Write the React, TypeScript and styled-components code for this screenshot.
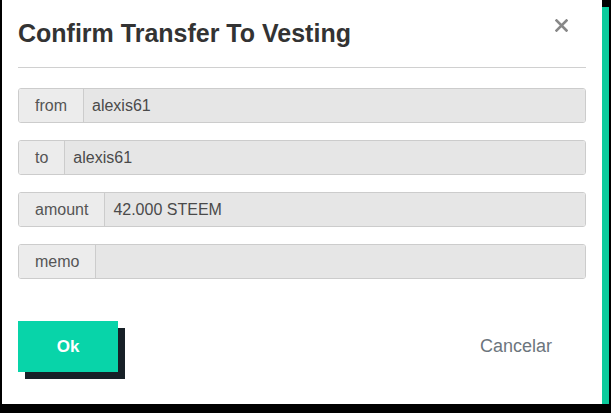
import React from "react";
import styled, { createGlobalStyle } from "styled-components";

const GlobalStyle = createGlobalStyle`
    body {
        margin: 0;
        background: #000;
        font-family: "Liberation Sans", Arial, sans-serif;
    }
`

const Modal = styled.div`
    box-sizing: border-box;
    width: 600px;
    height: 404px;
    margin-left: 2px;
    padding: 0 16px 32px;
    background: #fff;
    box-shadow: 7px 7px 0 #0bcb9c;
    display: flex;
    flex-direction: column;
`

const Header = styled.div`
    display: flex;
    justify-content: space-between;
    align-items: flex-start;
    padding: 19px 0;
    border-bottom: 1px solid #d0d0d0;
`

const Title = styled.h2`
    margin: 0;
    font-family: "Liberation Sans", Arial, sans-serif;
    font-size: 25px;
    line-height: 29px;
    font-weight: bold;
    color: #333;
`

const Close = styled.button`
    border: none;
    background: none;
    padding: 0;
    margin-right: 18px;
    width: 13px;
    height: 13px;
    display: flex;
    cursor: pointer;
`

const Form = styled.div`
    display: flex;
    flex-direction: column;
    gap: 17px;
    padding-top: 20px;
`

const InputGroup = styled.div`
    display: flex;
    height: 35px;
    box-sizing: border-box;
    border: 1px solid #ccc;
    border-radius: 3px;
    overflow: hidden;
    font-size: 16px;
    color: #555;
`

const Addon = styled.span`
    display: flex;
    align-items: center;
    padding: 0 16px;
    background: #ececec;
    border-right: 1px solid #ccc;
`

const Value = styled.span`
    flex: 1;
    display: flex;
    align-items: center;
    padding: 0 8px;
    background: #e6e6e6;
    color: #4a4a4a;
`

const Footer = styled.div`
    display: flex;
    justify-content: space-between;
    align-items: center;
    margin-top: 42px;
`

const OkButton = styled.button`
    width: 100px;
    height: 51px;
    border: none;
    background: #08d4a9;
    color: #fff;
    font-family: inherit;
    font-size: 17px;
    font-weight: bold;
    box-shadow: 7px 7px 0 #172027;
    cursor: pointer;
`

const CancelButton = styled.button`
    border: none;
    background: none;
    margin-right: 34px;
    padding: 0;
    font-family: inherit;
    font-size: 18px;
    color: #6c757d;
    cursor: pointer;
`

const fields = [
    { label: "from", value: "alexis61" },
    { label: "to", value: "alexis61" },
    { label: "amount", value: "42.000 STEEM" },
    { label: "memo", value: "" },
]

export default function App() {
    return (
        <>
            <GlobalStyle />
            <Modal>
                <Header>
                    <Title>Confirm Transfer To Vesting</Title>
                    <Close aria-label="close">
                        <svg width="13" height="13" viewBox="0 0 13 13">
                            <path d="M1.5 1.5 L11.5 11.5 M11.5 1.5 L1.5 11.5" stroke="#888" strokeWidth="2.6" strokeLinecap="square" />
                        </svg>
                    </Close>
                </Header>
                <Form>
                    {fields.map(f => (
                        <InputGroup key={f.label}>
                            <Addon>{f.label}</Addon>
                            <Value>{f.value}</Value>
                        </InputGroup>
                    ))}
                </Form>
                <Footer>
                    <OkButton>Ok</OkButton>
                    <CancelButton>Cancelar</CancelButton>
                </Footer>
            </Modal>
        </>
    )
}
